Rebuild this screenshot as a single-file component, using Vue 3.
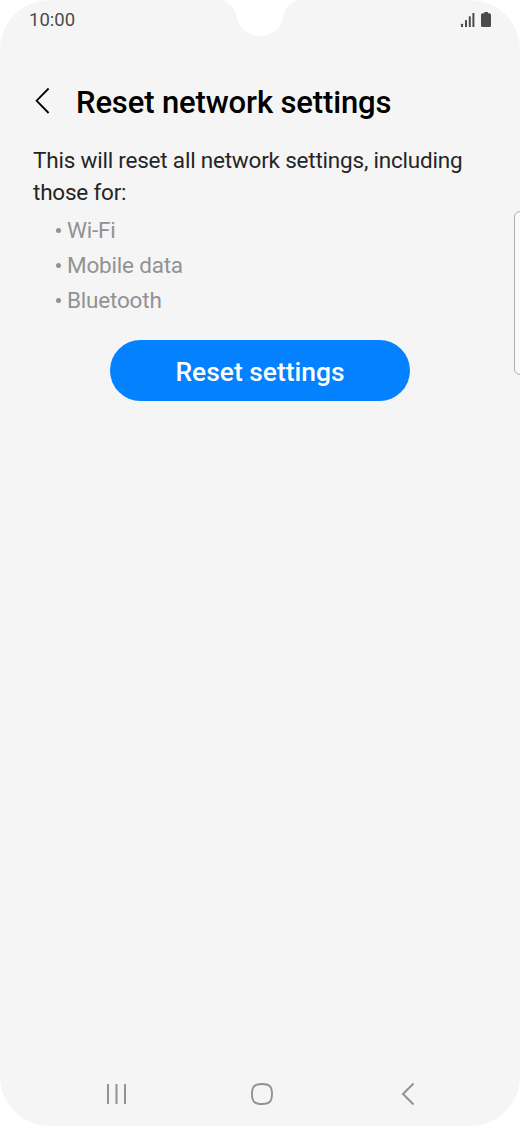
<script setup>
const items = ['Wi-Fi', 'Mobile data', 'Bluetooth']
</script>

<template>
  <div class="phone">
    <svg class="notch" width="80" height="37" viewBox="0 0 80 37">
      <path d="M0 0C9 1.5 14 7 16 14C18 27 27 36 40 36C53 36 62 27 64 14C66 7 71 1.5 80 0Z" fill="#fff" />
    </svg>
    <header class="status">
      <span class="time">10:00</span>
      <svg width="32" height="16" viewBox="0 0 32 16" fill="#4b4b4b">
        <rect x="1" y="11.7" width="2" height="3.3" rx=".6" />
        <rect x="5" y="8" width="2" height="7" rx=".6" />
        <rect x="8.8" y="4.3" width="2" height="10.7" rx=".6" />
        <rect x="12.4" y="1" width="2" height="14" rx=".6" />
        <path d="M24 1.5Q24 0 25.2 0H27Q28.2 0 28.2 1.2H29.4Q31 1.2 31 2.8V13.4Q31 15 29.4 15H22.6Q21 15 21 13.4V2.8Q21 1.2 22.6 1.2H24Z" />
      </svg>
    </header>
    <div class="title-bar">
      <svg width="16" height="28" viewBox="0 0 16 28" fill="none" stroke="#000" stroke-width="1.8">
        <path d="M14.6 1.5L2.6 13.7L14.6 26" />
      </svg>
      <h1>Reset network settings</h1>
    </div>
    <main>
      <p>This will reset all network settings, including those for:</p>
      <ul>
        <li v-for="item in items" :key="item"><span>{{ item }}</span></li>
      </ul>
      <button>Reset settings</button>
    </main>
    <div class="edge-handle"></div>
    <nav>
      <svg width="22" height="22" viewBox="0 0 22 22" fill="#929292">
        <rect x="1" y="1" width="2" height="20" rx=".5" />
        <rect x="9.5" y="1" width="2" height="20" rx=".5" />
        <rect x="18" y="1" width="2" height="20" rx=".5" />
      </svg>
      <svg class="home" width="24" height="24" viewBox="0 0 24 24" fill="none" stroke="#929292" stroke-width="1.9">
        <path d="M12 2C19 2 22 4 22 12C22 20 19 22 12 22C5 22 2 20 2 12C2 4 5 2 12 2Z" />
      </svg>
      <svg width="14" height="24" viewBox="0 0 14 24" fill="none" stroke="#929292" stroke-width="2">
        <path d="M12.5 1.5L2 12L12.5 22.5" />
      </svg>
    </nav>
  </div>
</template>

<style>
body {
  background: #fff;
}
</style>

<style scoped>
.phone {
  position: relative;
  box-sizing: border-box;
  width: 520px;
  height: 1126px;
  display: flex;
  flex-direction: column;
  overflow: hidden;
  border-radius: 50px;
  background: #f5f5f5;
  font-family: Roboto, sans-serif;
}
.notch {
  position: absolute;
  top: 0;
  left: 220px;
}
.status {
  display: flex;
  justify-content: space-between;
  height: 40px;
  padding: 0 28px 0 29px;
  box-sizing: border-box;
}
.status svg {
  margin-top: 12px;
}
.time {
  font-size: 18.5px;
  line-height: 40px;
  color: #4b4b4b;
}
.title-bar {
  display: flex;
  align-items: center;
  height: 44px;
  margin-top: 41px;
  padding-left: 34px;
}
.title-bar svg {
  margin-top: -4px;
}
h1 {
  margin: 0 0 0 26px;
  font-size: 31px;
  font-weight: 500;
  line-height: 44px;
  letter-spacing: -0.13px;
  white-space: nowrap;
  color: #000;
}
main {
  display: flex;
  flex-direction: column;
  padding: 19px 33px 0;
}
p {
  margin: 0;
  font-size: 22.5px;
  line-height: 32px;
  letter-spacing: -0.21px;
  color: #252525;
}
ul {
  margin: 5px 0 0;
  padding: 0;
  list-style: none;
}
li {
  display: flex;
  align-items: center;
  height: 35px;
  padding-left: 23px;
  font-size: 22.5px;
  letter-spacing: -0.2px;
  color: #929292;
}
li span {
  line-height: 26px;
  padding-bottom: 2px;
}
li::before {
  content: '';
  width: 5px;
  height: 5px;
  margin-right: 6px;
  border-radius: 50%;
  background: #929292;
}
button {
  align-self: center;
  width: 300px;
  height: 61px;
  margin-top: 22px;
  padding: 2px 0 0;
  border: 0;
  border-radius: 31px;
  background: #0381fe;
  color: #fff;
  font: 500 26.4px Roboto, sans-serif;
}
.edge-handle {
  position: absolute;
  top: 211px;
  left: 514px;
  box-sizing: border-box;
  width: 20px;
  height: 164px;
  border: 1.5px solid #b0b0b0;
  border-radius: 6px;
  background: #fafafa;
}
nav {
  display: flex;
  justify-content: space-between;
  align-items: center;
  margin: auto 105px 20px 106px;
  height: 24px;
}
.home {
  margin-right: 6px;
}
</style>
